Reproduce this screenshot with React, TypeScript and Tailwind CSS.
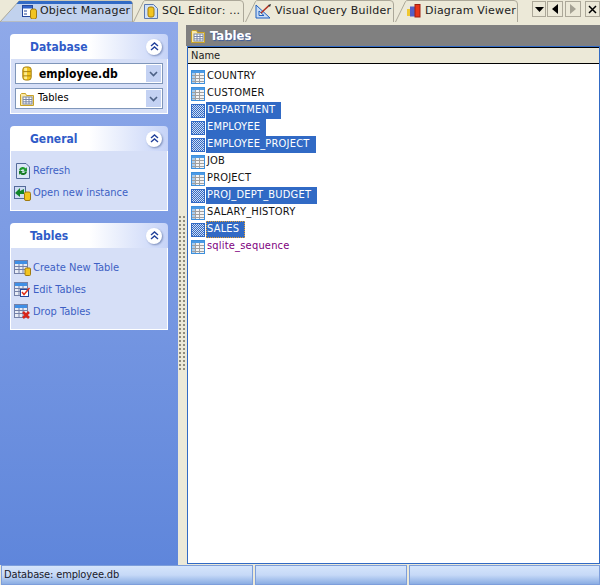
import React from "react";

const sans = "font-['DejaVu_Sans_Condensed','Liberation_Sans',sans-serif]";
const dejavu = "font-['DejaVu_Sans',Verdana,sans-serif]";

function TableIcon({ selected }: { selected?: boolean }) {
  if (selected) {
    const cells = [];
    for (let y = 1; y < 13; y++) for (let x = 1; x < 13; x++) if ((x + y) % 2 === 0) cells.push(<rect key={x + "-" + y} x={x} y={y} width="1" height="1" fill="#cfdcf3" />);
    return (
      <svg width="14" height="14" viewBox="0 0 14 14" className="shrink-0" shapeRendering="crispEdges">
        <rect x="0" y="0" width="14" height="14" fill="#316ac5" />
        {cells}
      </svg>
    );
  }
  return (
    <svg width="14" height="14" viewBox="0 0 14 14" className="shrink-0" shapeRendering="crispEdges">
      <rect x="0.5" y="0.5" width="13" height="13" fill="#f4f4f4" stroke="#3d8fdc" />
      <rect x="1" y="1" width="12" height="2" fill="#4a9ae6" />
      <rect x="1" y="3" width="3" height="10" fill="#a6cdf0" />
      <path d="M1 5.5H13M1 8.5H13M1 11.5H13M4.5 3V13M8.5 3V13" stroke="#a0a0a0" strokeWidth="1" />
    </svg>
  );
}

function DbIcon({ w = 10, h = 16 }: { w?: number; h?: number }) {
  return (
    <svg width={w} height={h} viewBox="0 0 10 16" className="shrink-0">
      <rect x="0.5" y="1" width="9" height="14" rx="3" fill="#f2c420" stroke="#a07a10" />
      <rect x="2" y="2" width="3" height="12" fill="#fdec90" />
      <path d="M1 6H9M1 10.5H9" stroke="#a07a10" />
    </svg>
  );
}

function FolderTable({ s = 14 }: { s?: number }) {
  return (
    <svg width={s} height={s} viewBox="0 0 14 14" className="shrink-0">
      <path d="M0.5 2.5V13.5H13.5V3.5H6.5L5.5 1.5H1.5Z" fill="#fbe9a6" stroke="#c9a227" />
      <rect x="3" y="5" width="9" height="7" fill="#fff" stroke="#7b88a8" />
      <path d="M3 7.5H12M3 9.8H12M6 5V12M9 5V12" stroke="#7b88a8" />
    </svg>
  );
}

function SmallTable({ children }: { children?: React.ReactNode }) {
  return (
    <svg width="17" height="16" viewBox="0 0 17 16" className="shrink-0">
      <rect x="0.5" y="0.5" width="13" height="13" fill="#e8ecf5" stroke="#7480a8" />
      <rect x="1" y="1" width="12" height="3" fill="#3f8fe6" />
      <path d="M1 6.5H13M1 9.5H13M5 4V13M9 4V13" stroke="#7480a8" />
      {children}
    </svg>
  );
}

function Chevrons() {
  return (
    <span className="w-[16px] h-[16px] rounded-full bg-white shadow-[1px_1px_2px_#7d8fbb] flex items-center justify-center">
      <svg width="9" height="9" viewBox="0 0 9 9">
        <path d="M1 4L4.5 1L8 4M1 8L4.5 5L8 8" fill="none" stroke="#21409a" strokeWidth="1.4" />
      </svg>
    </span>
  );
}

function ComboArrow() {
  return (
    <span className="w-[15px] h-[17px] bg-[#c4d2f3] flex items-center justify-center">
      <svg width="9" height="6" viewBox="0 0 9 6">
        <path d="M1 1L4.5 4.5L8 1" fill="none" stroke="#4d6185" strokeWidth="1.6" />
      </svg>
    </span>
  );
}

function Panel({ title, className, children }: { title: string; className: string; children: React.ReactNode }) {
  return (
    <section className="w-[158px]">
      <div className="h-[25px] rounded-t-[4px] bg-gradient-to-r from-white via-white to-[#c6d3f7] flex items-center justify-between pl-[20px] pr-[6px]">
        <span className={`${sans} text-[12px] font-bold text-[#2f5bc8]`}>{title}</span>
        <Chevrons />
      </div>
      <div className={`bg-[#d6dff7] border border-t-0 border-white ${className}`}>{children}</div>
    </section>
  );
}

function Link({ icon, text }: { icon: React.ReactNode; text: string }) {
  return (
    <div className="h-[22px] flex items-center">
      <span className="w-[22px] flex justify-start pl-[3px]">{icon}</span>
      <span className={`${sans} text-[11px] text-[#3d5fc4]`}>{text}</span>
    </div>
  );
}

function Combo({ icon, text, bold }: { icon: React.ReactNode; text: string; bold?: boolean }) {
  return (
    <div className="h-[21px] bg-white border border-[#7f96ba] flex items-center pr-[1px]">
      <span className="w-[22px] flex justify-center">{icon}</span>
      <span className={`${sans} flex-1 text-black ${bold ? "text-[12px] font-bold pl-[1px]" : "text-[11px]"}`}>{text}</span>
      <ComboArrow />
    </div>
  );
}

function Tab({ w, icon, text }: { w: number; icon: React.ReactNode; text: string }) {
  return (
    <div className="relative h-[22px] shrink-0 flex items-center" style={{ width: w }}>
      <svg className="absolute inset-0" width={w} height="22" viewBox={`0 0 ${w} 22`}>
        <path d={`M0.5 22L10.5 1.5Q11 0.5 13 0.5H${w - 5}Q${w - 1.5} 0.5 ${w - 1.5} 4V22`} fill="#ece9d8" stroke="#aca899" />
      </svg>
      <span className="relative ml-[11px] mr-[3px] flex">{icon}</span>
      <span className={`relative ${dejavu} text-[11px] tracking-[0.2px] text-[#222] whitespace-nowrap`}>{text}</span>
    </div>
  );
}

function NavBtn({ children, w }: { children: React.ReactNode; w: string }) {
  return (
    <span className={`h-[16px] border border-[#aca899] flex items-center justify-center ${w}`}>
      {children}
    </span>
  );
}

const rows: { n: string; sel?: boolean; focus?: boolean; purple?: boolean }[] = [
  { n: "COUNTRY" },
  { n: "CUSTOMER" },
  { n: "DEPARTMENT", sel: true },
  { n: "EMPLOYEE", sel: true },
  { n: "EMPLOYEE_PROJECT", sel: true },
  { n: "JOB" },
  { n: "PROJECT" },
  { n: "PROJ_DEPT_BUDGET", sel: true },
  { n: "SALARY_HISTORY" },
  { n: "SALES", sel: true, focus: true },
  { n: "sqlite_sequence", purple: true },
];

function StatusCell({ className, children }: { className: string; children?: React.ReactNode }) {
  return (
    <div className={`h-[20px] border border-[#7d9edb] bg-gradient-to-b from-[#d6e5fb] via-[#c6d9f7] to-[#8badE3] flex items-center pl-[2px] ${sans} text-[11px] tracking-[-0.15px] text-[#1a1a2a] ${className}`}>
      {children}
    </div>
  );
}

export default function App() {
  return (
    <div className="w-[600px] h-[585px] bg-[#ece9d8] flex flex-col overflow-hidden">
      <div className="h-[22px] flex items-start shrink-0">
        <div className="relative w-[133px] h-[22px] shrink-0 flex items-center">
          <svg className="absolute inset-0" width="133" height="22" viewBox="0 0 133 22">
            <path d="M0 22L19 1H130Q132.5 1 132.5 4V22Z" fill="#c1d2ee" stroke="#aca899" />
            <path d="M19 1H130Q132 1 132.5 4H16.5Z" fill="#316ac5" />
          </svg>
          <span className="relative ml-[22px] mr-[3px] flex">
            <svg width="15" height="15" viewBox="0 0 15 15">
              <rect x="0.5" y="1.5" width="10" height="11" fill="#fff" stroke="#23479c" />
              <rect x="1" y="2" width="9" height="2.5" fill="#2f62c9" />
              <path d="M2 7H5M2 10H5" stroke="#23479c" />
              <rect x="8.5" y="5" width="6" height="10" rx="2" fill="#f2c420" stroke="#a07a10" />
            </svg>
          </span>
          <span className={`relative ${dejavu} text-[11px] tracking-[0.2px] text-[#222] whitespace-nowrap`}>Object Manager</span>
        </div>
        <Tab w={112} text="SQL Editor: ..." icon={
          <svg width="15" height="15" viewBox="0 0 15 15">
            <path d="M0.5 0.5H9.5L13.5 4.5V14.5H0.5Z" fill="#cfe0f7" stroke="#5a78b0" />
            <rect x="4" y="3" width="6" height="10" rx="2" fill="#f2c420" stroke="#a07a10" />
          </svg>
        } />
        <Tab w={150} text="Visual Query Builder" icon={
          <svg width="17" height="15" viewBox="0 0 17 15" className="-ml-[1px]">
            <path d="M1 1V14H15Z M4 7V11.5H9Z" fill="#c8dcf5" fillRule="evenodd" stroke="#1f5fc0" />
            <path d="M6 9L14 1.5" stroke="#b03020" strokeWidth="1.6" />
            <path d="M13 1L16 0L15 3Z" fill="#303030" />
          </svg>
        } />
        <Tab w={124} text="Diagram Viewer" icon={
          <svg width="15" height="14" viewBox="0 0 15 14" className="ml-[1px]">
            <rect x="0" y="5" width="5" height="7" fill="#f0c830" />
            <rect x="3" y="2.5" width="5" height="10" fill="#5560c8" />
            <rect x="8" y="0.5" width="5" height="12.5" fill="#e8351a" stroke="#a02010" />
          </svg>
        } />
        <div className="ml-[13px] mt-[1px] flex items-start">
          <NavBtn w="w-[14px] mr-[1px]">
            <svg width="9" height="5" viewBox="0 0 9 5"><path d="M0 0H9L4.5 5Z" fill="#000" /></svg>
          </NavBtn>
          <NavBtn w="w-[16px] mr-[2px]">
            <svg width="6" height="10" viewBox="0 0 6 10"><path d="M6 0V10L0 5Z" fill="#000" /></svg>
          </NavBtn>
          <NavBtn w="w-[16px] mr-[4px]">
            <svg width="6" height="10" viewBox="0 0 6 10"><path d="M0 0V10L6 5Z" fill="#a5a294" /></svg>
          </NavBtn>
          <NavBtn w="w-[15px]">
            <svg width="9" height="9" viewBox="0 0 9 9"><path d="M1 1L8 8M8 1L1 8" stroke="#000" strokeWidth="1.5" /></svg>
          </NavBtn>
        </div>
      </div>

      <div className="flex-1 flex min-h-0">
        <aside className="w-[178px] bg-gradient-to-b from-[#8fa9e9] to-[#5f86db] pt-[12px] pl-[10px] flex flex-col gap-[12px] shrink-0">
          <Panel title="Database" className="h-[55px] px-[4px] pt-[4px] flex flex-col gap-[4px]">
            <Combo bold text="employee.db" icon={<DbIcon w={10} h={15} />} />
            <Combo text="Tables" icon={<FolderTable s={14} />} />
          </Panel>
          <Panel title="General" className="h-[60px] pt-[9px]">
            <Link text="Refresh" icon={
              <svg width="14" height="16" viewBox="0 0 14 16" className="ml-[2px]">
                <path d="M0.5 0.5H10L13.5 4V15.5H0.5Z" fill="#dbe6f7" stroke="#546a9a" />
                <path d="M3 7A4 4 0 0 1 10 5.5L11 4V8.5H7L8.5 7A2.5 2.5 0 0 0 4.5 8Z" fill="#1f9a2f" />
                <path d="M11 9A4 4 0 0 1 4 10.5L3 12V8H7L5.5 9.2A2.5 2.5 0 0 0 9.5 8.5Z" fill="#157a22" />
              </svg>
            } />
            <Link text="Open new instance" icon={
              <svg width="17" height="16" viewBox="0 0 17 16">
                <rect x="0.5" y="1.5" width="11" height="12" fill="#cfdcf5" stroke="#546a9a" />
                <path d="M1 8L6 3V6L10 4V9L6 9V12Z" fill="#12852a" />
                <rect x="10.5" y="7" width="6" height="8.5" rx="1.5" fill="#f2c420" stroke="#a07a10" />
              </svg>
            } />
          </Panel>
          <Panel title="Tables" className="h-[82px] pt-[9px]">
            <Link text="Create New Table" icon={
              <SmallTable><rect x="11" y="8" width="5.5" height="7.5" rx="1" fill="#f2c420" stroke="#a07a10" /></SmallTable>
            } />
            <Link text="Edit Tables" icon={
              <SmallTable>
                <rect x="6.5" y="7.5" width="8" height="7" fill="#fff" stroke="#23479c" />
                <path d="M8 10L10 12.5L15.5 6" fill="none" stroke="#e0301a" strokeWidth="1.5" />
              </SmallTable>
            } />
            <Link text="Drop Tables" icon={
              <SmallTable><path d="M9 8L15 14M15 8L9 14" stroke="#d8261a" strokeWidth="2.6" /></SmallTable>
            } />
          </Panel>
        </aside>

        <div className="w-[8px] shrink-0 pt-[193px]">
          <div className="w-[8px] h-[157px] bg-[radial-gradient(circle,#8f8c7d_1px,transparent_1.2px)] bg-[length:4px_4px]" />
        </div>

        <main className="flex-1 min-w-0 flex flex-col pt-[3px]">
          <div className="h-[21px] bg-[#808080] flex items-center pl-[5px] gap-[5px] shrink-0">
            <FolderTable s={14} />
            <span className={`${sans} text-[13px] font-bold text-white [text-shadow:1px_1px_1px_#3d5c9a]`}>Tables</span>
          </div>
          <div className="h-[518px] ml-[1px] bg-white border border-[#316ac5] flex flex-col min-h-0">
            <div className="h-[17px] border-y border-black bg-[#ece9d8] flex items-center pl-[3px] pt-[1px] shrink-0">
              <span className={`${sans} text-[11px] text-[#222]`}>Name</span>
            </div>
            <ul className="pt-[4px] pl-[3px]">
              {rows.map((r) => (
                <li key={r.n} className="h-[17px] flex items-center">
                  <TableIcon selected={r.sel} />
                  <span
                    className={`${sans} ml-[1px] h-[17px] flex items-center pl-[1px] pr-[6px] text-[11px] tracking-[0.2px] whitespace-nowrap ${
                      r.sel ? "bg-[#316ac5] text-white" : r.purple ? "text-[#800080]" : "text-[#111]"
                    } ${r.focus ? "outline-1 -outline-offset-1 outline-dotted outline-[#e8a030]" : ""}`}
                  >
                    {r.n}
                  </span>
                </li>
              ))}
            </ul>
          </div>
        </main>
      </div>

      <div className="h-[20px] flex gap-[2px] pl-[1px] shrink-0">
        <StatusCell className="w-[252px]">Database: employee.db</StatusCell>
        <StatusCell className="w-[152px]" />
        <StatusCell className="flex-1" />
      </div>
    </div>
  );
}
